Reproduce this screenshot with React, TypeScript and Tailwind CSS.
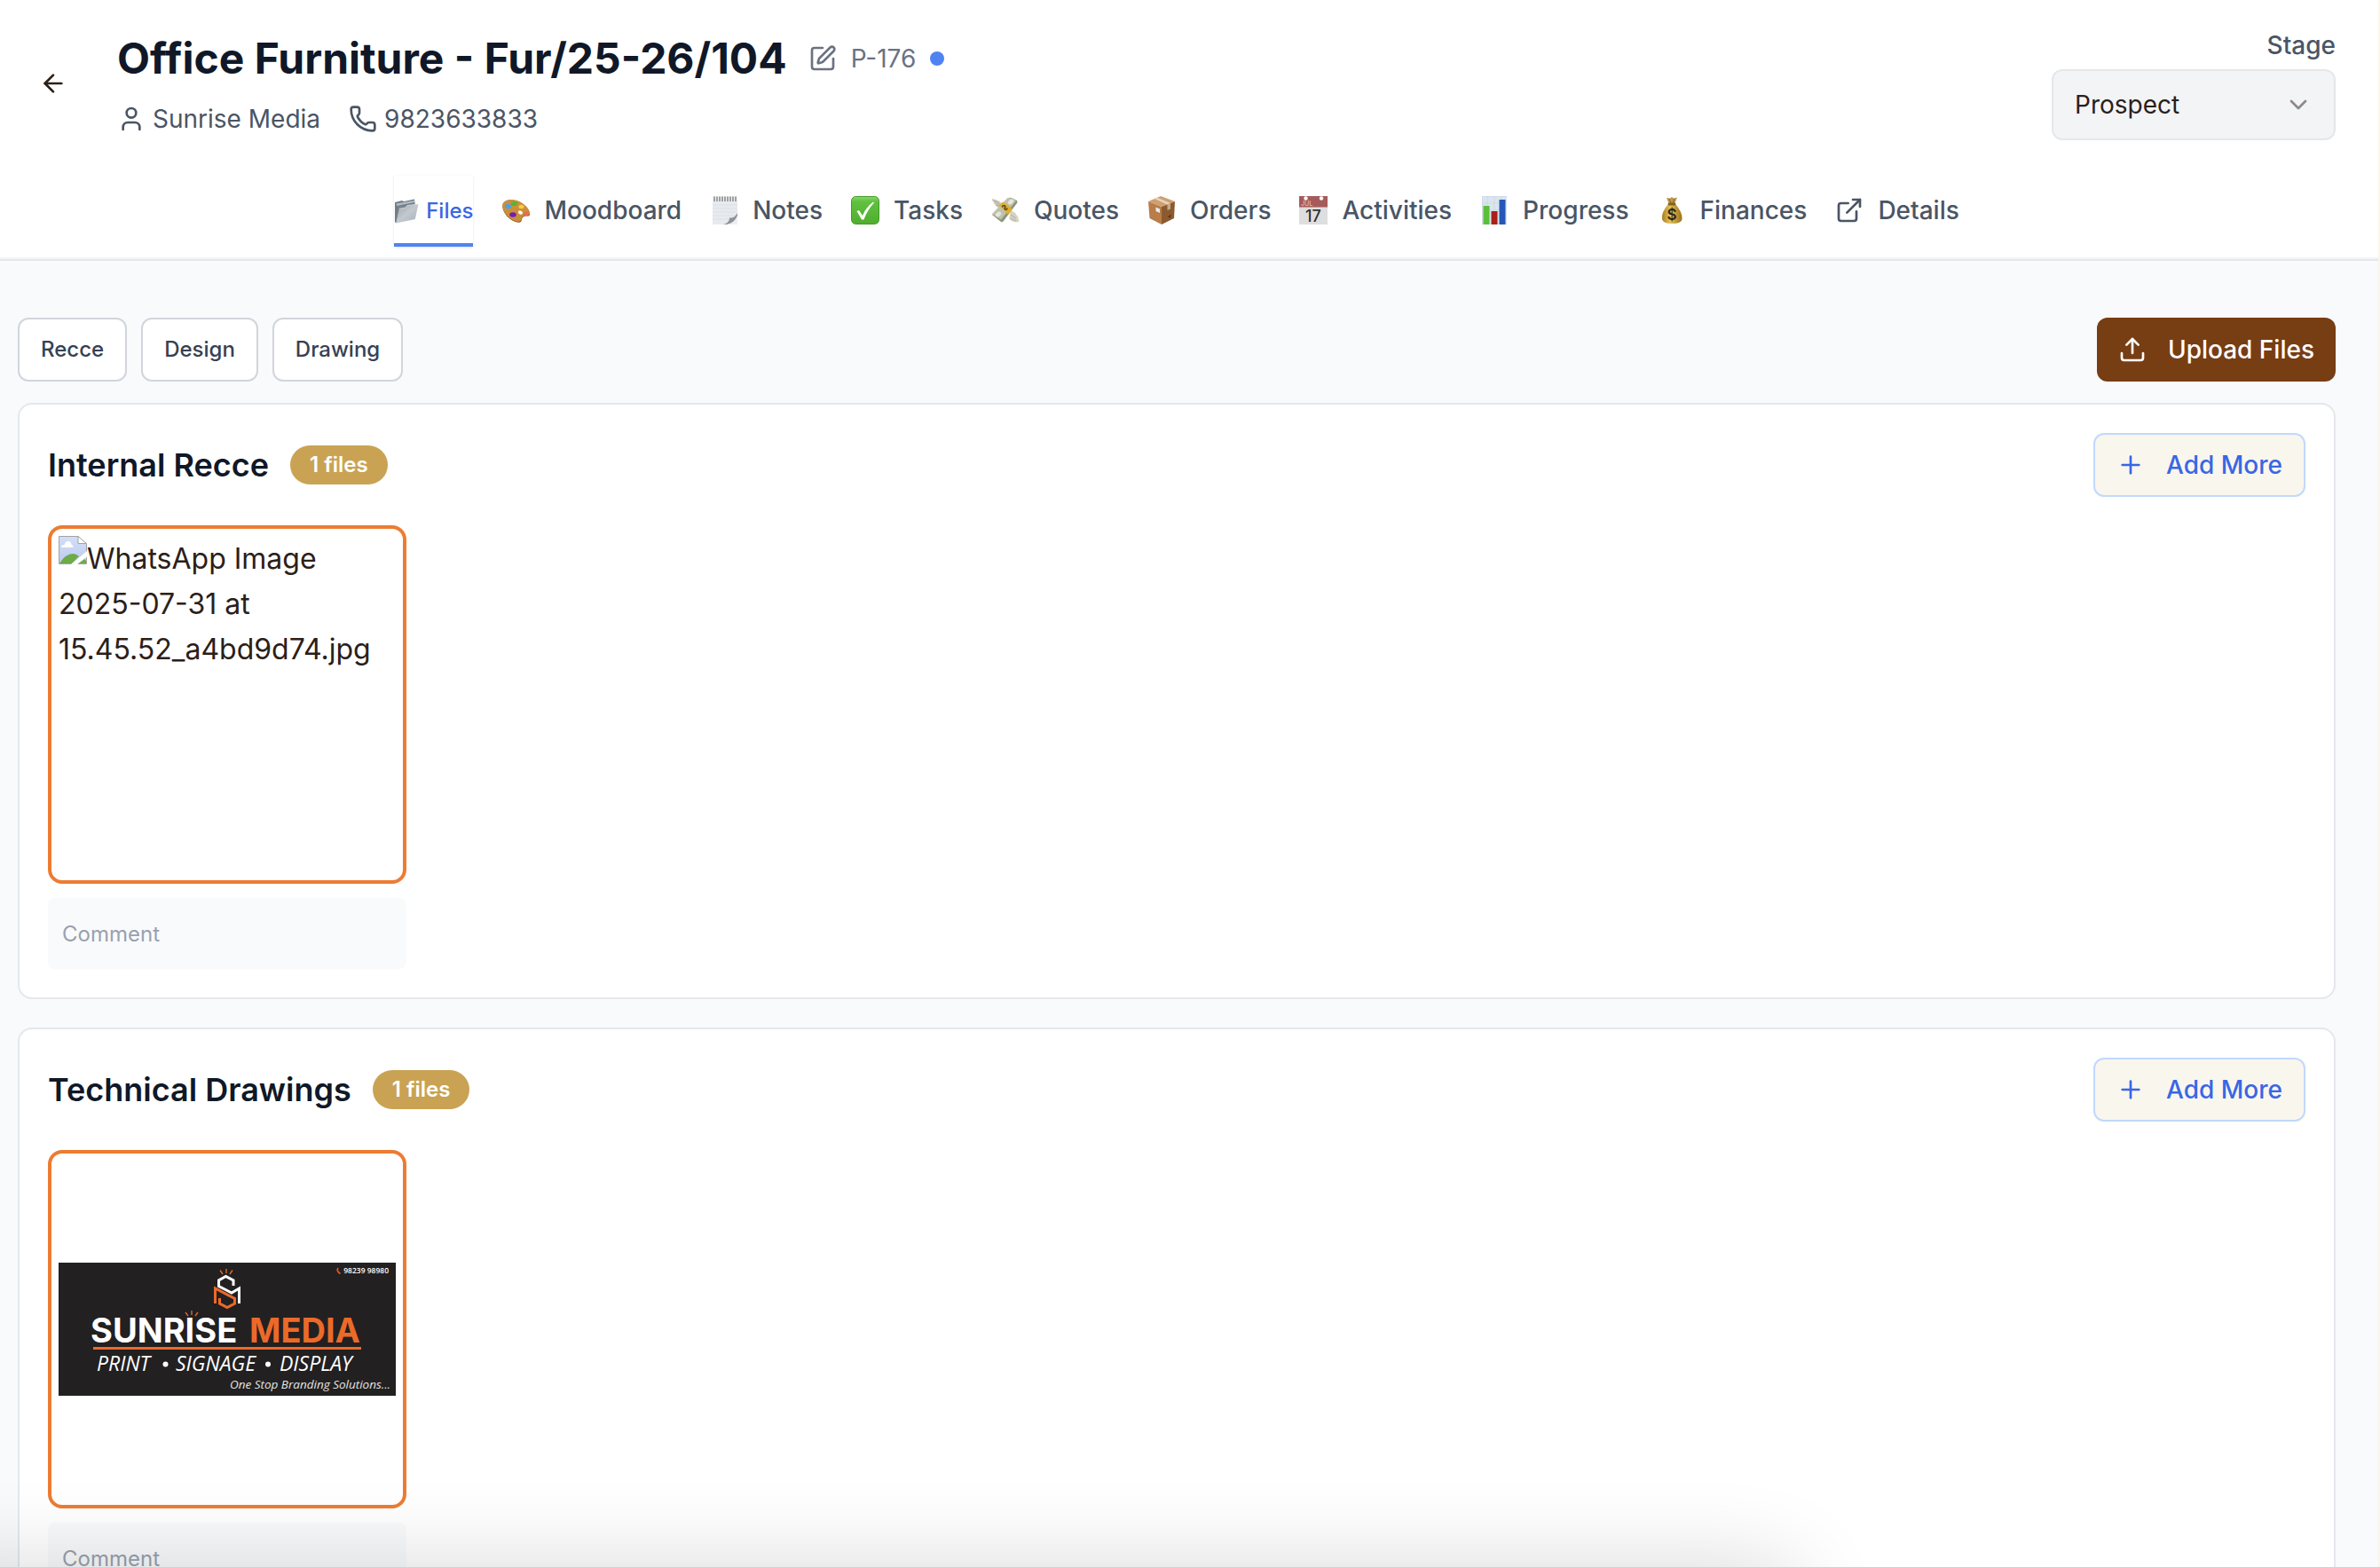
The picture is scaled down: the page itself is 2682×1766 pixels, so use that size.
import React from "react";
import {
  ArrowLeft,
  ChevronDown,
  ExternalLink,
  Phone,
  Plus,
  SquarePen,
  Upload,
  User,
} from "lucide-react";

const svgProps = { viewBox: "0 0 32 32", className: "size-8 shrink-0", "aria-hidden": true } as const;

function FolderIcon() {
  return (
    <svg viewBox="0 0 28 28" className="size-7 shrink-0" aria-hidden="true">
      <defs>
        <linearGradient id="folderBack" x1="0" y1="0" x2="0" y2="1">
          <stop offset="0" stopColor="#6d7a86" />
          <stop offset="1" stopColor="#8b959e" />
        </linearGradient>
        <linearGradient id="folderFront" x1="0" y1="0" x2="1" y2="1">
          <stop offset="0" stopColor="#9aa3ab" />
          <stop offset="0.5" stopColor="#c3c9cf" />
          <stop offset="1" stopColor="#a9b0b8" />
        </linearGradient>
      </defs>
      <path d="M1 4 L9 2 L11 3 L23 0.500 L24.500 12 L2 27 Z" fill="url(#folderBack)" />
      <path d="M2.500 5.500 L23 2 L23 4 L2.500 8 Z" fill="#b4bdc5" />
      <path d="M5.500 11.500 L13 10 L15 7.500 L27.500 6 L24 22 Q24 23 23 23.300 L2 27.500 Z" fill="url(#folderFront)" />
      <path d="M5.500 11.500 L13 10 L15 7.500 L27.500 6" stroke="#e5e8ea" strokeWidth="0.700" fill="none" />
      <path d="M1 4 L5.500 11.500 L2 27.500 L1 26 Z" fill="#737d86" />
    </svg>
  );
}

function PaletteIcon() {
  return (
    <svg {...svgProps}>
      <path
        d="M2 9 C4 4 12 3 19 6 C27 9.500 33 17 32 21 C31 24 27 21.500 24.500 23.500 C22 25.500 24 28.500 21 29.500 C17 30.500 9 27 5 21 C2 17 0.500 12.500 2 9 Z"
        fill="#8a5a1f"
      />
      <path
        d="M1.500 8.500 C4 3.500 12 3 19 5.500 C27 9 33 16 31.800 20 C30.500 23 27 20.500 24.300 22.500 C21.500 24.500 24 27.500 20.500 28.500 C16.500 29.500 9 26 5 20 C2 16 0.200 12 1.500 8.500 Z"
        fill="#cc8e3b"
      />
      <ellipse cx="21.500" cy="18.500" rx="2.600" ry="2" fill="#fff" transform="rotate(25 21.5 18.500)" />
      <ellipse cx="14.500" cy="8.500" rx="3.400" ry="2.500" fill="#55b531" />
      <ellipse cx="7.500" cy="11.500" rx="3.600" ry="2.800" fill="#4aa3dc" />
      <ellipse cx="22.500" cy="12" rx="3" ry="2.200" fill="#f3ce3b" />
      <ellipse cx="28" cy="20" rx="3" ry="2" fill="#ec6a55" />
      <ellipse cx="13" cy="21" rx="3.800" ry="2.800" fill="#6d1fb5" />
    </svg>
  );
}

function NotepadIcon() {
  return (
    <svg {...svgProps}>
      <rect x="3" y="2" width="28" height="30" fill="#e7eaee" />
      <path d="M3 10H31M3 14H31M3 18H31M3 22H31M3 26H24" stroke="#d9dfe7" strokeWidth="0.700" />
      <rect x="3" y="0" width="28" height="6" fill="#f2f3f4" />
      <path
        d="M5 0.500V6M8 0.500V6M11 0.500V6M14 0.500V6M17 0.500V6M20 0.500V6M23 0.500V6M26 0.500V6M29 0.500V6"
        stroke="#6a6a6a"
        strokeWidth="1.200"
      />
      <path d="M16 32 Q22 30 21.500 25 Q28 25.500 31 18 V32 Z" fill="#fafafa" />
      <path d="M15 32 Q22 30.500 22 24.500 Q28 25 31 19 V22 Q28 30 19 32 Z" fill="#8e9398" />
      <path d="M20 32 Q28 30 31 23 V32 Z" fill="#eceef0" />
    </svg>
  );
}

function CheckIcon() {
  return (
    <svg {...svgProps}>
      <defs>
        <linearGradient id="checkFill" x1="0" y1="0" x2="0" y2="1">
          <stop offset="0" stopColor="#8bd66b" />
          <stop offset="0.180" stopColor="#5fc23f" />
          <stop offset="1" stopColor="#50ad2d" />
        </linearGradient>
      </defs>
      <rect x="0.500" y="0.500" width="31" height="31" rx="5" fill="url(#checkFill)" stroke="#459b2a" />
      <path d="M6.500 17 L9 16 L13 22 C16 15 20 10 25 6.500 L26 7.500 C21 13 17 19.500 14.500 26.500 H12 Z" fill="#fff" />
    </svg>
  );
}

function FlyingMoneyIcon() {
  return (
    <svg {...svgProps}>
      <path d="M1 3 C5 4 10 5 12 9 L11 14 L8 14 C8 12 5 12 5 10 C3 9 3 8 3 7 C1 6 1 4 1 3 Z" fill="#cbc8b8" />
      <path d="M31 29 C28 30 22 29 20 25 L22 17 C25 17 28 19 28 21 C30 22 31 24 30 25 C32 27 31 28 31 29 Z" fill="#d6d3c4" />
      <path d="M3 5 L9 9 M5 10 L10 11 M22 21 L28 25 M22 25 L28 28" stroke="#a5a18d" strokeWidth="0.800" />
      <path d="M1 21 L18 3 Q20 1 23 2 L29 5 Q30 6 29 8 L14 28 Q12 30 11 29 Z" fill="#8f9480" />
      <path d="M1 20 L18 2.500 Q22 1 28 5 L11 26.500 Z" fill="#bfc2ae" />
      <ellipse cx="22" cy="6.500" rx="3.500" ry="2.300" fill="#e6e6d8" transform="rotate(-40 22 6.500)" />
      <ellipse cx="8" cy="20.500" rx="3.500" ry="2.300" fill="#e6e6d8" transform="rotate(-40 8 20.500)" />
      <path d="M9 10.500 L13 6.500 L23 13.500 L22.500 17 L19 21 Z" fill="#e2ad2a" />
      <path d="M12.500 12.500 C13 9.500 17 10.500 15.500 13 C14 15.500 18 16.500 18 13.500" stroke="#46422f" strokeWidth="1.500" fill="none" />
    </svg>
  );
}

function PackageBoxIcon() {
  return (
    <svg {...svgProps}>
      <path d="M1 6 L15 0 L31 6 L16 12 Z" fill="#cf9f70" />
      <path d="M1 6 L16 12 V32 L2.500 25 Z" fill="#b87d49" />
      <path d="M31 6 L16 12 V32 L30 25 Z" fill="#8d5a30" />
      <path d="M8 3 L11 1.800 L26 8 L22.500 9.500 Z" fill="#e6d4bd" />
      <path d="M22.500 9.500 L26 8 V14.500 L22.500 16 Z" fill="#c6a988" />
      <path d="M9.500 12.500 L14 14.500 V19 L9.500 17 Z" fill="#e8eaed" />
      <path d="M23 23 L27 20.500 L25.500 25 Z" fill="#5a3516" />
    </svg>
  );
}

function CalendarIcon() {
  return (
    <svg {...svgProps}>
      <rect x="0" y="0" width="32" height="32" fill="#dedede" />
      <rect x="0" y="0" width="32" height="12.500" fill="#a65a5a" />
      <circle cx="7.500" cy="2.500" r="2.200" fill="#fff" />
      <circle cx="25" cy="2.500" r="2.200" fill="#fff" />
      <text x="2" y="11" fontSize="7" fontFamily="Inter, sans-serif" fill="#e3bcbc">JUL</text>
      <text x="16" y="28.500" fontSize="18" textAnchor="middle" fontFamily="Inter, sans-serif" fontWeight="500" fill="#333">17</text>
    </svg>
  );
}

function BarChartIcon() {
  return (
    <svg {...svgProps}>
      <rect x="2" y="0" width="28" height="32" fill="#dbe5ee" />
      <path d="M2 0.500H30M2.500 0V32M8 0V32M16 0V32M24 0V32M2 8H30M2 16H30" stroke="#c8d3de" strokeWidth="0.600" />
      <rect x="3.500" y="11" width="7" height="21" fill="#5bbf3c" />
      <rect x="12.500" y="17" width="7" height="15" fill="#a82219" />
      <rect x="21.500" y="4" width="7" height="28" fill="#2657b8" />
    </svg>
  );
}

function MoneyBagIcon() {
  return (
    <svg {...svgProps}>
      <defs>
        <linearGradient id="bagFill" x1="0" y1="0" x2="1" y2="0">
          <stop offset="0" stopColor="#a77b20" />
          <stop offset="0.400" stopColor="#e5c258" />
          <stop offset="1" stopColor="#9c7019" />
        </linearGradient>
      </defs>
      <path d="M10 2 L14 2.500 L16 1 L18 2.500 L22 1.500 L19.500 8 H12.500 Z" fill="#bd9650" />
      <path d="M13 3 L15 8 M18.500 3 L17.500 8" stroke="#84602a" strokeWidth="0.900" />
      <path d="M12 9 Q4 18 5 26 Q6 31 16 31 Q27 31 27.500 26 Q28 18 20 9 Z" fill="url(#bagFill)" />
      <rect x="11.500" y="7.500" width="9" height="3" rx="1.500" fill="#86601a" />
      <text x="16" y="27" fontSize="17" textAnchor="middle" fontFamily="Inter, sans-serif" fontWeight="600" fill="#2e2410">$</text>
    </svg>
  );
}

function BrokenImageIcon() {
  return (
    <svg viewBox="0 0 32 32" className="mb-[5px] inline-block size-8 align-baseline" aria-hidden="true">
      <defs>
        <linearGradient id="brokenSky" x1="0" y1="0" x2="0" y2="1">
          <stop offset="0" stopColor="#d3dff7" />
          <stop offset="1" stopColor="#bccbee" />
        </linearGradient>
      </defs>
      <path d="M0.500 0.500 H22 L31.500 9 V31.500 H0.500 Z" fill="url(#brokenSky)" stroke="#a3a3a3" />
      <path d="M22 0.500 V8.500 H31.500 Z" fill="#fff" stroke="#a3a3a3" />
      <path d="M3 13 Q3 10 6.500 10 Q8 6 11 6 Q14 6 14.500 9.500 Q16.500 10 16.500 13 Z" fill="#fff" />
      <path d="M1 31 Q8 20 16 20 Q20 20 23 23 L15 31 Z M22 31 L29 26 L31 28 V31 Z" fill="#6dab49" />
      <path d="M14 32 L32 17 V23.500 L21 32 Z" fill="#fff" />
    </svg>
  );
}

function SunriseBanner() {
  const script = "'Open Sans', 'Noto Sans', sans-serif";
  return (
    <svg viewBox="0 0 380 150" className="w-full" role="img" aria-label="Sunrise Media">
      <rect width="380" height="150" fill="#222021" />
      <g fill="none" strokeWidth="3">
        <path d="M197 26 V20 L188.500 15.500 L180.500 20 V26.500 L195 34 L203.500 29 V46" stroke="#fff" />
        <path d="M176.500 46 V29 L198.500 40.500 V46 L190 50.500 L181.500 46 V40" stroke="#ec6a29" />
      </g>
      <path
        d="M182 8.500 L185 13 M189 7 V12 M196 8.500 L193 13 M143 56 L146 60 M150 54 V59 M157 56 L154 60"
        stroke="#e0682b"
        strokeWidth="1.400"
        fill="none"
      />
      <g fontSize="38" fontWeight="700" fontFamily="Inter, sans-serif">
        <text x="36" y="90" fill="#fff">SUNRISE</text>
        <text x="215" y="90" fill="#ec6a29">MEDIA</text>
      </g>
      <rect x="39" y="95" width="302" height="3" fill="#ec6a29" />
      <g fontFamily={script} fontStyle="italic" fontWeight="500" fill="#fff">
        <text x="43" y="122" fontSize="23">PRINT</text>
        <circle cx="120.500" cy="114.500" r="3" />
        <text x="132" y="122" fontSize="23">SIGNAGE</text>
        <circle cx="236" cy="114.500" r="3" />
        <text x="249" y="122" fontSize="23">DISPLAY</text>
        <text x="374" y="142" fontSize="13.500" textAnchor="end" fill="#e5e5e5">One Stop Branding Solutions...</text>
      </g>
      <path d="M315 6 Q312.500 9 317.500 12.500" stroke="#d9562b" strokeWidth="1.800" fill="none" />
      <text x="372" y="12" fontSize="8.500" fontWeight="600" textAnchor="end" fontFamily="'Open Sans', sans-serif" fill="#fff">98239 98980</text>
    </svg>
  );
}

const tabs = [
  { label: "Moodboard", icon: <PaletteIcon /> },
  { label: "Notes", icon: <NotepadIcon /> },
  { label: "Tasks", icon: <CheckIcon /> },
  { label: "Quotes", icon: <FlyingMoneyIcon /> },
  { label: "Orders", icon: <PackageBoxIcon /> },
  { label: "Activities", icon: <CalendarIcon /> },
  { label: "Progress", icon: <BarChartIcon /> },
  { label: "Finances", icon: <MoneyBagIcon /> },
  { label: "Details", icon: <ExternalLink className="size-8 shrink-0" /> },
];

function Header() {
  return (
    <header className="border-b-2 border-gray-200 bg-white">
      <div className="border-b-2 border-gray-100 pr-12 pl-5">
        <div className="flex items-start justify-between pt-8">
          <div className="flex items-start">
            <button
              type="button"
              aria-label="Back"
              className="mt-[46px] ml-6 flex size-8 items-center justify-center text-[#2b2018]"
            >
              <ArrowLeft className="size-8" />
            </button>
            <div className="ml-14">
              <div className="flex h-[68px] items-center">
                <h1 className="text-[48px] font-bold text-gray-900">Office Furniture - Fur/25-26/104</h1>
                <button type="button" aria-label="Edit project" className="ml-6 text-gray-500">
                  <SquarePen className="size-8" />
                </button>
                <span className="ml-4 text-[28px] text-gray-500">P-176</span>
                <span className="ml-4 size-4 rounded-full bg-[#4f83f1]" />
              </div>
              <div className="flex h-[68px] items-center gap-8 text-[28px] text-gray-600">
                <span className="flex items-center gap-2">
                  <User className="size-8" />
                  Sunrise Media
                </span>
                <a href="tel:9823633833" className="flex items-center gap-2">
                  <Phone className="size-8" />
                  9823633833
                </a>
              </div>
            </div>
          </div>
          <div className="flex w-80 flex-col items-end gap-2">
            <label htmlFor="stage" className="text-[28px] leading-[38px] font-medium text-gray-600">
              Stage
            </label>
            <div className="relative w-full">
              <select
                id="stage"
                className="h-20 w-full appearance-none rounded-xl border-2 border-gray-200 bg-gray-100 px-6 text-[28px] text-[#2b2018]"
              >
                <option>Prospect</option>
              </select>
              <ChevronDown className="pointer-events-none absolute top-6 right-[26px] size-8 text-[#2b2018] opacity-50" />
            </div>
          </div>
        </div>
        <nav className="mt-6 flex h-[98px] items-start justify-center gap-8 pt-1.5">
          <a
            href="#files"
            className="flex h-20 items-center gap-2 border-b-4 border-[#4f83f1] pt-1 text-2xl font-medium text-[#3a66e5] shadow-sm"
          >
            <FolderIcon />
            Files
          </a>
          {tabs.map((tab) => (
            <a
              key={tab.label}
              href={"#" + tab.label.toLowerCase()}
              className="flex h-[78px] items-center gap-4 text-[28px] font-medium text-gray-600"
            >
              {tab.icon}
              {tab.label}
            </a>
          ))}
        </nav>
      </div>
    </header>
  );
}

function FileSection({ title, id, children }: { title: string; id: string; children: React.ReactNode }) {
  return (
    <section className="rounded-2xl border-2 border-gray-200 bg-white p-8">
      <div className="flex items-center justify-between">
        <div className="flex items-center gap-6">
          <h2 className="text-4xl font-semibold text-gray-900">{title}</h2>
          <span className="flex h-11 items-center rounded-full bg-[#c9a353] px-[22px] text-2xl font-semibold text-white">
            1 files
          </span>
        </div>
        <button
          type="button"
          className="flex h-[72px] items-center gap-6 rounded-xl border-2 border-[#c1d9fb] bg-[#f9f6ee] px-6 text-[28px] font-medium text-[#3a66e5]"
        >
          <Plus className="size-8" />
          Add More
        </button>
      </div>
      <div className="mt-8 w-[404px]">
        <div className="flex h-[404px] items-center rounded-2xl border-4 border-[#ec7c33] bg-white p-2">{children}</div>
        <input
          id={id}
          aria-label={title + " comment"}
          placeholder="Comment"
          className="mt-4 h-20 w-full rounded-lg bg-gray-50 px-4 text-2xl text-gray-700 placeholder:text-gray-400"
        />
      </div>
    </section>
  );
}

export default function App() {
  return (
    <div
      className="relative h-screen overflow-hidden border-r-2 border-[#faf5ea] bg-[#f9fafc] antialiased"
      style={{ fontFamily: "Inter, sans-serif" }}
    >
      <Header />
      <main className="flex flex-col gap-8 pt-16 pr-12 pl-5">
        <div className="flex flex-col gap-6">
          <div className="flex items-center justify-between">
            <div className="flex gap-4">
              {["Recce", "Design", "Drawing"].map((name) => (
                <button
                  key={name}
                  type="button"
                  className="h-[72px] rounded-xl border-2 border-gray-300 bg-white px-6 text-2xl font-medium text-gray-700"
                >
                  {name}
                </button>
              ))}
            </div>
            <button
              type="button"
              className="flex h-[72px] items-center gap-6 rounded-xl bg-[#773d13] px-6 text-[28px] font-medium text-white"
            >
              <Upload className="size-8" />
              Upload Files
            </button>
          </div>
          <FileSection title="Internal Recce" id="recce-comment">
            <p className="w-full self-start text-[32px] leading-[51px] text-[#2b2018]">
              <BrokenImageIcon />
              WhatsApp Image 2025-07-31 at 15.45.52_a4bd9d74.jpg
            </p>
          </FileSection>
        </div>
        <FileSection title="Technical Drawings" id="drawings-comment">
          <SunriseBanner />
        </FileSection>
      </main>
      <div className="pointer-events-none absolute top-full -left-24 h-24 w-[79%] shadow-[0_0_100px_rgba(0,0,0,0.16)]" />
    </div>
  );
}
